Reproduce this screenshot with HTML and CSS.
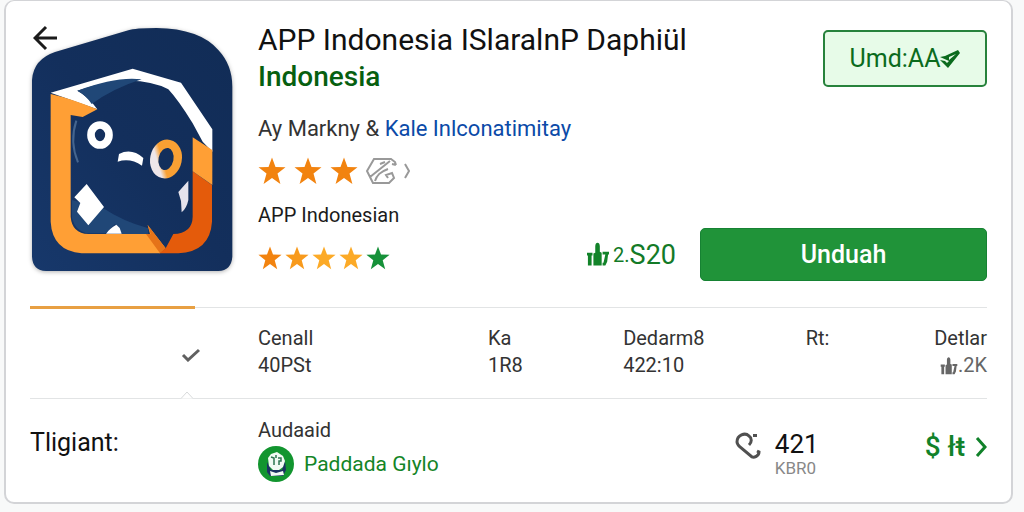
FILE: index.html
```html
<!DOCTYPE html>
<html lang="id">
<head>
    <meta charset="UTF-8">
    <meta name="viewport" content="width=device-width, initial-scale=1.0">
    <title>APP Indonesia</title>
    <link rel="stylesheet" href="styles.css">
</head>
<body>

<!-- shared shapes -->
<svg class="defs" aria-hidden="true">
    <symbol id="star" viewBox="0 0 28 28">
        <path d="M14 0.500l3.500 9.500 10 .3-8 6.300 2.900 10.400-8.400-6-8.400 6 2.900-10.400-8-6.300 10-.3z"/>
    </symbol>
    <symbol id="thumb" viewBox="0 0 24 26">
        <path d="M0 11h6v3H5v11H1V14H0zM7 12l2-1V4c0-5 5-5 5 0v6l2 1v14H7zM17 10h7v3h-1l-1 8-2 4h-3v-3h1l2-9h-3z"/>
    </symbol>
</svg>

<main class="card">
    <section class="header">
        <div class="logo">
            <svg class="logo-art" viewBox="93 75 612 750" role="img" aria-label="APP Indonesia">
                <defs>
                    <linearGradient id="navy" x1="0" y1="1" x2="1" y2="0">
                        <stop offset="0" stop-color="#17386b"/>
                        <stop offset="0.500" stop-color="#132f5c"/>
                        <stop offset="1" stop-color="#112c56"/>
                    </linearGradient>
                    <linearGradient id="ring" gradientUnits="userSpaceOnUse" x1="455" y1="500" x2="530" y2="460">
                        <stop offset="0.250" stop-color="#eee6ea"/>
                        <stop offset="0.450" stop-color="#f9a033"/>
                    </linearGradient>
                </defs>
                <path fill="url(#navy)" d="M96 240Q100 178 165 156L385 91Q405 84 470 84Q600 86 655 150Q697 195 697 260V770Q694 811 655 813H138Q98 811 96 770Z"/>
                <path fill="#fff" d="M152 278L398 206L543 248L637 388V455L608 425L578 370Q535 300 505 268Q400 215 232 272Q265 290 292 328Z"/>
                <path fill="#204777" d="M232 272Q350 228 425 238Q340 265 275 312Q258 285 232 272Z"/>
                <path fill="#204777" d="M310 625Q370 665 445 685V702H365L345 672L318 700H258Q225 690 216 655V600Z"/>
                <path fill="#ff9f35" d="M152 282Q210 295 292 328L248 351L212 345V650Q216 700 265 702H450L443 675L497 745L480 760H245Q157 752 152 665Z"/>
                <path fill="#e57319" d="M443 675L497 745L480 760L438 702H452Z"/>
                <path fill="#e45b0b" d="M497 745L520 702Q577 700 578 650V514L636 555V665Q630 755 535 760H478Z"/>
                <path fill="#ff9f35" d="M578 412L637 450V555L578 514Z"/>
                <path fill="none" stroke="#45658f" stroke-width="6" d="M229 362Q208 425 234 487"/>
                <ellipse cx="300" cy="405" rx="27" ry="30" fill="none" stroke="#fff" stroke-width="23"/>
                <ellipse cx="498" cy="477" rx="35" ry="46" fill="none" stroke="url(#ring)" stroke-width="25" transform="rotate(12 498 477)"/>
                <path fill="#fff" d="M353 485L357 462Q395 443 430 474L426 497Q390 472 353 485Z"/>
                <path fill="#fff" d="M260 552L312 621L265 676L231 635L241 609L223 592Z"/>
                <path fill="#fff" d="M318 701Q328 686 349 674L359 684L365 701Z"/>
                <path fill="#e6e3ec" d="M565 542V600Q560 625 545 637L543 603L535 576Z"/>
            </svg>
            <button class="back" type="button" aria-label="Kembali">
                <svg viewBox="0 0 26 26"><path d="M24 13H2M13 2L2 13l11 11"/></svg>
            </button>
        </div>

        <div class="info">
            <h1 class="title">APP Indonesia ISlaralnP Daphiül <span>Indonesia</span></h1>
            <p class="author">Ay Markny &amp; <a href="#">Kale Inlconatimitay</a></p>
            <div class="stars" role="img" aria-label="3 bintang">
                <svg><use href="#star"/></svg>
                <svg><use href="#star"/></svg>
                <svg><use href="#star"/></svg>
                <svg class="tag" viewBox="0 0 46 28">
                    <path d="M30 8l-1-3-4-3H8L1 14l6 12h16l5-5-2-5-6 2 2 3M30 8l-4-1M4 20L24 4M9 24c2-6 5-9 13-12M14 7l5-2M39 7l4 7-4 7"/>
                </svg>
            </div>
            <p class="subtitle">APP Indonesian</p>
            <div class="stars small" role="img" aria-label="5 bintang">
                <svg><use href="#star"/></svg>
                <svg class="mid"><use href="#star"/></svg>
                <svg class="light"><use href="#star"/></svg>
                <svg class="light"><use href="#star"/></svg>
                <svg class="green"><use href="#star"/></svg>
            </div>
        </div>

        <div class="actions">
            <button class="button outline" type="button">Umd:AA<svg viewBox="0 0 20 20"><path fill-rule="evenodd" d="M0 8l5-1 13-6 2 3L8 19 0 11l5 1 2 2 2-2zM9 11l7-6-7 3z"/></svg></button>
            <div class="download">
                <span class="likes"><svg><use href="#thumb"/></svg><small>2.</small>S20</span>
                <button class="button primary" type="button">Unduah</button>
            </div>
        </div>
    </section>

    <div class="progress"></div>

    <section class="stats">
        <div class="check">
            <svg viewBox="0 0 20 14"><path d="M2 7l5 5L18 2"/></svg>
        </div>
        <div>Cenall<br>40PSt</div>
        <div>Ka<br>1R8</div>
        <div>Dedarm8<br>422:10</div>
        <div>Rt:</div>
        <div class="last">Detlar<br><span class="muted"><svg><use href="#thumb"/></svg>.2K</span></div>
        <svg class="notch" viewBox="0 0 12 8"><path d="M0 7.500L6 1l6 6.500"/></svg>
    </section>

    <section class="footer">
        <h2>Tligiant:</h2>
        <div class="dev">
            <span>Audaaid</span>
            <a href="#">
                <svg viewBox="0 0 36 36">
                    <circle cx="18" cy="18" r="18" fill="#12952f"/>
                    <path fill="#1c3263" d="M9 16l4 8h11l3-9 1 9-3 6H12l-3-4z"/>
                    <path fill="#f2faf3" d="M10 12l3-4 3-1 3-1 3 2 3 2 2 5-2 6-4 3h-6l-4-4z"/>
                    <path fill="none" stroke="#2d7650" stroke-width="1.500" d="M13 11l3 1v7M18 9v3M20 12h3v3h-2v4"/>
                    <path fill="#f2faf3" d="M12 25l6 2 7-2 1 4-13 1z"/>
                </svg>
                Paddada Gıylo
            </a>
        </div>
        <div class="count">
            <svg viewBox="0 0 28 28"><path d="M15 14c3-3 3-7 0-9C11 1 3 4 3 11c0 2 1 3 3 5l12 10c2 1 7-1 7-5l-2-1"/><path d="M19 4.500h4"/></svg>
            <div>421<small>KBR0</small></div>
        </div>
        <a class="price" href="#">$ łŧ<svg viewBox="0 0 12 22"><path d="M2 2l8 9-8 9"/></svg></a>
    </section>
</main>

</body>
</html>
```
FILE: styles.css
```css
* {
    box-sizing: border-box;
}
body {
    font-family: Roboto, Arial, sans-serif;
    font-size: 20px;
    line-height: 26px;
    margin: 0;
    color: #333;
    background-color: #f8f9f9;
}
h1, h2, p {
    margin: 0;
    font-weight: 400;
}
a {
    text-decoration: none;
}
svg {
    display: block;
    flex: none;
}
button {
    font-family: inherit;
    cursor: pointer;
}
.defs {
    position: absolute;
    width: 0;
    height: 0;
}
.card {
    margin: 0 11px 8px 4px;
    padding: 0 24px;
    border: 2px solid #d3d4d7;
    border-top-width: 1px;
    border-radius: 10px;
    background-color: #fff;
}
.header {
    display: flex;
    padding: 20px 0 25px;
}
.logo {
    position: relative;
    flex: none;
    width: 228px;
    padding-top: 4px;
}
.logo-art {
    width: 206px;
    height: 250px;
    filter: drop-shadow(0 1px 2px rgba(0, 0, 0, 0.3));
}
.back {
    position: absolute;
    top: 4px;
    left: 3px;
    padding: 0;
    border: none;
    background: none;
}
.back svg {
    width: 26px;
    height: 26px;
    fill: none;
    stroke: #1b1b1b;
    stroke-width: 3;
}
.info {
    flex: 1;
    min-width: 0;
    white-space: nowrap;
}
.title {
    font-size: 30px;
    line-height: 37px;
    color: #111;
}
.title span {
    display: block;
    font-size: 28px;
    font-weight: 500;
    color: #075f10;
}
.author {
    margin-top: 21px;
    font-size: 22px;
}
.author a {
    color: #0b4aa8;
}
.stars {
    display: flex;
    align-items: center;
    gap: 8px;
    height: 28px;
    margin: 15px 0 17px;
    fill: #f2830f;
}
.stars svg {
    width: 28px;
    height: 28px;
}
.stars .tag {
    width: 46px;
    fill: none;
    stroke: #999;
    stroke-width: 2;
}
.subtitle {
    color: #1b1b1b;
}
.stars.small {
    gap: 3px;
    height: 24px;
    margin: 18px 0 11px;
}
.stars.small svg {
    width: 24px;
    height: 24px;
}
.stars .mid {
    fill: #f89a1c;
}
.stars .light {
    fill: #fcaa27;
}
.stars .green {
    fill: #169139;
}
.actions {
    display: flex;
    flex-direction: column;
    justify-content: space-between;
    align-items: flex-end;
    padding-top: 9px;
}
.button {
    display: flex;
    justify-content: center;
    align-items: center;
    border-radius: 5px;
}
.outline {
    width: 164px;
    height: 57px;
    font-size: 25px;
    color: #0b6b1d;
    border: 2px solid #27823c;
    background-color: #e7fbe8;
}
.outline svg {
    width: 20px;
    height: 20px;
    fill: #0b6b1d;
}
.download {
    display: flex;
    align-items: center;
    gap: 24px;
}
.likes {
    display: flex;
    align-items: center;
    font-size: 27px;
    color: #137a27;
}
.likes svg {
    width: 22px;
    height: 25px;
    margin-right: 4px;
    fill: #128329;
}
.likes small {
    font-size: 20px;
}
.primary {
    width: 287px;
    height: 53px;
    font-size: 25px;
    font-weight: 500;
    color: #fff;
    border: 1px solid #168233;
    background-color: #209339;
}
.progress {
    height: 3px;
    background: linear-gradient(#e8a043, #e8a043) left / 165px 3px no-repeat,
        linear-gradient(#e2e4e5, #e2e4e5) center / 100% 1px no-repeat;
}
.stats {
    position: relative;
    display: grid;
    grid-template-columns: 228px 34fr 20fr 27fr 19fr auto;
    padding: 16px 0 19px;
    line-height: 27px;
    border-bottom: 1px solid #e2e4e5;
}
.check {
    align-self: center;
    padding-left: 151px;
}
.check svg {
    width: 20px;
    height: 14px;
    margin-top: 6px;
    fill: none;
    stroke: #606060;
    stroke-width: 3;
}
.last {
    text-align: right;
}
.muted {
    display: flex;
    justify-content: flex-end;
    align-items: center;
    color: #666;
}
.muted svg {
    width: 18px;
    height: 18px;
    fill: #666;
}
.notch {
    position: absolute;
    left: 151px;
    bottom: -1px;
    width: 12px;
    height: 8px;
    fill: #fff;
    stroke: #d8dadb;
}
.footer {
    display: flex;
    align-items: center;
    padding: 18px 0 20px;
}
.footer h2 {
    width: 228px;
    padding-bottom: 14px;
    font-size: 25px;
    color: #111;
}
.dev {
    flex: 1;
}
.dev a {
    display: flex;
    align-items: center;
    gap: 10px;
    margin-top: 3px;
    font-size: 21px;
    color: #148527;
}
.dev svg {
    width: 36px;
    height: 36px;
}
.count {
    display: flex;
    gap: 13px;
    margin-right: 106px;
    padding-top: 10px;
    font-size: 26px;
    color: #111;
}
.count svg {
    width: 28px;
    height: 28px;
    fill: none;
    stroke: #505050;
    stroke-width: 3;
}
.count small {
    display: block;
    font-size: 17px;
    line-height: 22px;
    color: #888;
}
.price {
    display: flex;
    align-items: center;
    gap: 10px;
    padding-bottom: 6px;
    font-size: 28px;
    font-weight: 500;
    color: #11822a;
}
.price svg {
    width: 12px;
    height: 22px;
    fill: none;
    stroke: #11822a;
    stroke-width: 3;
}
```
